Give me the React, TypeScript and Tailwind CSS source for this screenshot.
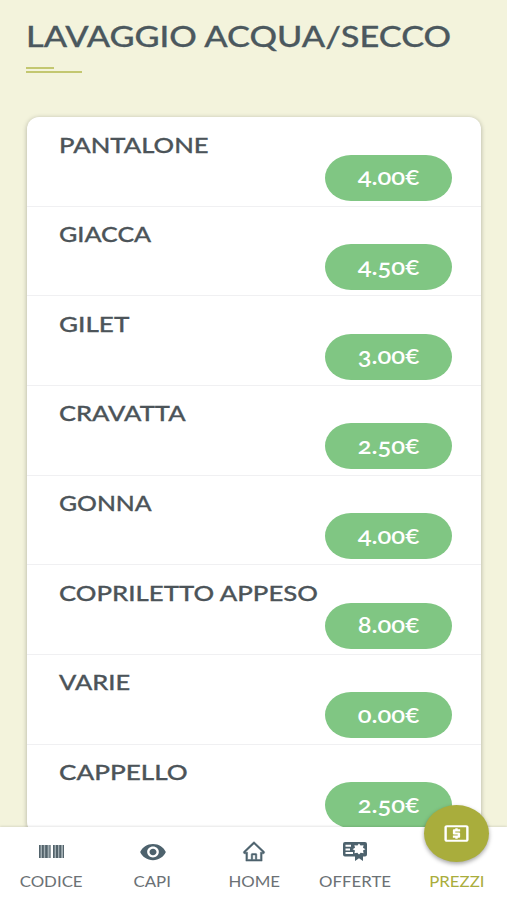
import React from 'react';
import clsx from 'clsx';
import { MdRemoveRedEye, MdLocalAtm } from 'react-icons/md';
import { AiOutlineHome } from 'react-icons/ai';

const priceList = [
  { name: "PANTALONE", price: "4.00", stretch: "scale-x-[1.165]" },
  { name: "GIACCA", price: "4.50", stretch: "scale-x-[1.14]" },
  { name: "GILET", price: "3.00", stretch: "scale-x-[1.185]" },
  { name: "CRAVATTA", price: "2.50", stretch: "scale-x-[1.16]" },
  { name: "GONNA", price: "4.00", stretch: "scale-x-[1.125]" },
  { name: "COPRILETTO APPESO", price: "8.00", stretch: "scale-x-[1.17]" },
  { name: "VARIE", price: "0.00", stretch: "scale-x-[1.155]" },
  { name: "CAPPELLO", price: "2.50", stretch: "scale-x-[1.185]" },
];

function BarcodeIcon() {
  return (
    <svg viewBox="0 0 25 13" className="h-[13px] w-[25px]">
      <path fill="#a3afb4" d="M0 0H11.5V13H0ZM14 0H25V13H14Z" />
      <path
        fill="#53636b"
        d="M0 0H1.5V13H0ZM3 0H4.8V13H3ZM6.2 0H8.6V13H6.2ZM10.5 0H11.5V13H10.5ZM14 0H15.6V13H14ZM17 0H19V13H17ZM20.3 0H22.2V13H20.3ZM24 0H25V13H24Z"
      />
    </svg>
  );
}

function CertificateIcon() {
  return (
    <svg viewBox="0 0 24 19" className="h-[19px] w-6" fill="currentColor">
      <path
        fillRule="evenodd"
        d="M2 0H22Q24 0 24 2V12.5Q24 14.5 22 14.5H2Q0 14.5 0 12.5V2Q0 0 2 0ZM2.5 2.8V4.8H8V2.8ZM2.5 6.5V8.4H7V6.5ZM2.5 10.1V12.1H10V10.1ZM16 1.6L14.4 3.6L11.4 3.2L12 5.8L9.6 7.2L12 8.6L11.4 11.2L14.4 10.8L16 12.8L17.6 10.8L20.6 11.2L20 8.6L22.4 7.2L20 5.8L20.6 3.2L17.6 3.6Z"
      />
      <path d="M12 13L16 12.6L20 13V19L16 16.3L12 19Z" />
    </svg>
  );
}

const navItems = [
  { label: "CODICE", icon: <BarcodeIcon /> },
  { label: "CAPI", icon: <MdRemoveRedEye preserveAspectRatio="none" className="h-[26px] w-7" /> },
  { label: "HOME", icon: <AiOutlineHome preserveAspectRatio="none" strokeWidth={20} className="h-[23px] w-6" /> },
  { label: "OFFERTE", icon: <CertificateIcon /> },
  { label: "PREZZI", icon: null, active: true },
];

function BottomNav() {
  return (
    <nav className="relative z-10 h-[73px] shrink-0 bg-white shadow-[0_-1px_2px_rgba(0,0,0,0.1)]">
      <div className="grid h-full grid-cols-5">
        {navItems.map((item) => (
          <button key={item.label} className="flex flex-col items-center pt-[10.5px] pl-px">
            <span className="flex h-7 items-center text-[#4d626d]">{item.icon}</span>
            <span
              className={clsx(
                "mt-[5px] scale-x-[1.16] text-[14.5px] leading-[22px]",
                item.active ? "text-[#a9ad3c]" : "text-[#6b7175]"
              )}
            >
              {item.label}
            </span>
          </button>
        ))}
      </div>
      <div className="absolute -top-[22px] right-[18px] flex h-[57px] w-[65px] items-center justify-center rounded-[50%] bg-[#a9ad3c] text-white shadow-[0_2px_4px_rgba(0,0,0,0.35)]">
        <MdLocalAtm preserveAspectRatio="none" className="h-[25px] w-[29px]" />
      </div>
    </nav>
  );
}

export default function App() {
  return (
    <div className="flex h-[900px] w-full flex-col overflow-hidden bg-[#f3f3dc] font-['Lato',sans-serif]">
      <main className="min-h-0 flex-1 overflow-hidden pr-[26px] pl-[27px]">
        <h1 className="mt-[18px] -ml-px origin-left scale-x-[1.184] text-[29px] leading-9 font-medium whitespace-nowrap text-[#4b585e] [-webkit-text-stroke:0.3px]">
          LAVAGGIO ACQUA/SECCO
        </h1>
        <div className="mt-[13px] -ml-px space-y-[1.5px]">
          <div className="h-[2px] w-7 bg-[#c3c770]" />
          <div className="h-[2px] w-14 bg-[#c3c770]" />
        </div>

        <ul className="mt-[44.5px] rounded-xl bg-white shadow-[0_1px_5px_rgba(0,0,0,0.28)]">
          {priceList.map((item) => (
            <li key={item.name} className="flex h-[89.67px] flex-col border-b border-[#f0f0f2] pr-[29px] pl-[31.5px]">
              <span
                className={clsx(
                  "mt-[13.5px] origin-left self-start text-[22px] leading-7 font-medium whitespace-nowrap text-[#4c5459] [-webkit-text-stroke:0.3px]",
                  item.stretch
                )}
              >
                {item.name}
              </span>
              <span className="-mt-[4px] flex h-[46px] w-[127px] shrink-0 items-center justify-center self-end rounded-[26px/23px] bg-[#80c683] pb-px text-white">
                <span className="flex scale-x-[1.16] items-baseline text-[22px] leading-none font-semibold">
                  <span className="oldstyle-nums">{item.price}</span>
                  <span className="text-[21px]">€</span>
                </span>
              </span>
            </li>
          ))}
        </ul>
      </main>
      <BottomNav />
    </div>
  );
}
